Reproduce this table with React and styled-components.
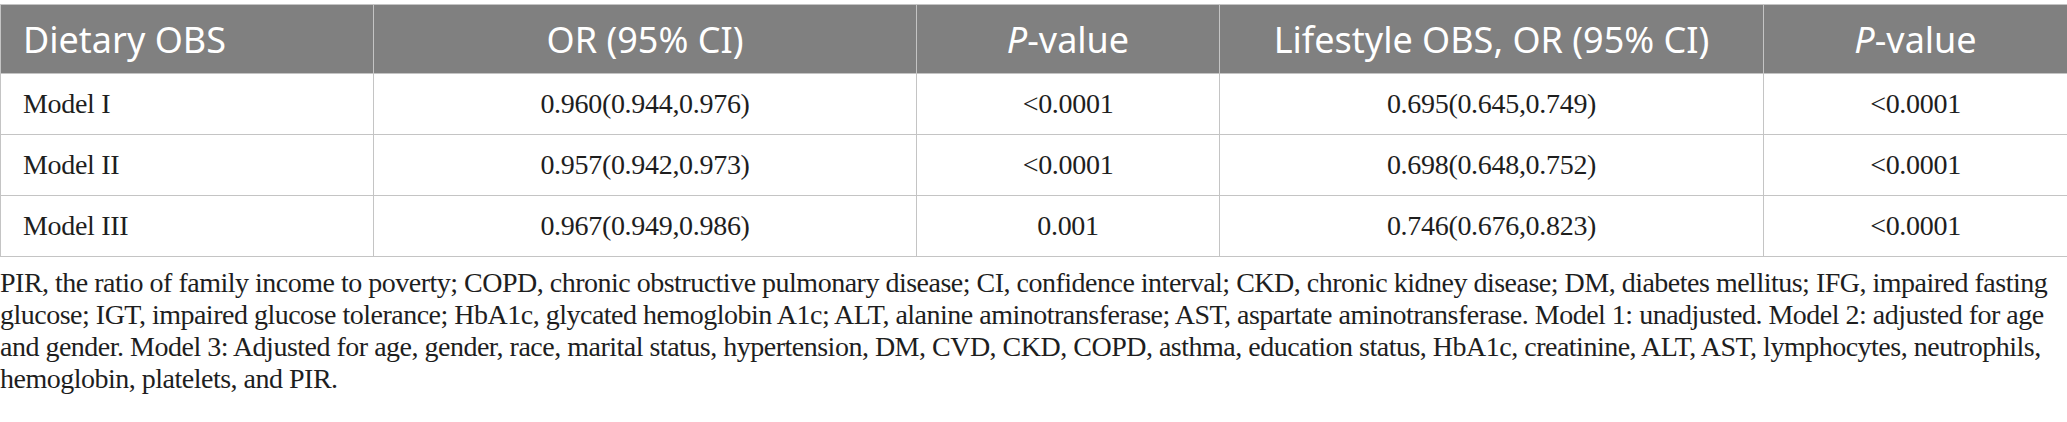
import React from 'react';
import styled, { createGlobalStyle } from 'styled-components';

const GlobalStyle = createGlobalStyle`
  html, body {
    margin: 0;
    padding: 0;
    background: #ffffff;
  }
`;

const Page = styled.div`
  width: 2067px;
  padding-top: 4px;
`;

const Table = styled.table`
  width: 100%;
  border-collapse: collapse;
  table-layout: fixed;
`;

const HeadCell = styled.th`
  height: 68px;
  padding: 0 22px;
  background: #808080;
  color: #ffffff;
  font-family: 'Noto Sans', 'Open Sans', sans-serif;
  font-size: 36px;
  font-weight: 400;
  text-align: ${({ $left }) => ($left ? 'left' : 'center')};
  border: 1px solid #c4c4c4;
  white-space: nowrap;
`;

const Cell = styled.td`
  height: 60px;
  padding: 0 22px;
  color: #1e1e1e;
  font-family: 'Liberation Serif', 'Times New Roman', serif;
  font-size: 28px;
  letter-spacing: -0.3px;
  text-align: ${({ $left }) => ($left ? 'left' : 'center')};
  border: 1px solid #c4c4c4;
  white-space: nowrap;
`;

const Footnote = styled.p`
  margin: 10px 0 0;
  color: #1e1e1e;
  font-family: 'Liberation Serif', 'Times New Roman', serif;
  font-size: 28px;
  line-height: 32px;
  letter-spacing: -0.5px;
`;

const columns = [373, 543, 303, 544, 304];

const rows = [
  ['Model I', '0.960(0.944,0.976)', '<0.0001', '0.695(0.645,0.749)', '<0.0001'],
  ['Model II', '0.957(0.942,0.973)', '<0.0001', '0.698(0.648,0.752)', '<0.0001'],
  ['Model III', '0.967(0.949,0.986)', '0.001', '0.746(0.676,0.823)', '<0.0001'],
];

const PValue = () => (
  <>
    <i>P</i>-value
  </>
);

export default function App() {
  return (
    <Page>
      <GlobalStyle />
      <Table>
        <colgroup>
          {columns.map((w, i) => (
            <col key={i} style={{ width: w }} />
          ))}
        </colgroup>
        <thead>
          <tr>
            <HeadCell $left>Dietary OBS</HeadCell>
            <HeadCell>OR (95% CI)</HeadCell>
            <HeadCell>
              <PValue />
            </HeadCell>
            <HeadCell>Lifestyle OBS, OR (95% CI)</HeadCell>
            <HeadCell>
              <PValue />
            </HeadCell>
          </tr>
        </thead>
        <tbody>
          {rows.map((row) => (
            <tr key={row[0]}>
              {row.map((value, i) => (
                <Cell key={i} $left={i === 0}>
                  {value}
                </Cell>
              ))}
            </tr>
          ))}
        </tbody>
      </Table>
      <Footnote>
        PIR, the ratio of family income to poverty; COPD, chronic obstructive pulmonary disease; CI,
        confidence interval; CKD, chronic kidney disease; DM, diabetes mellitus; IFG, impaired fasting
        glucose; IGT, impaired glucose tolerance; HbA1c, glycated hemoglobin A1c; ALT, alanine
        aminotransferase; AST, aspartate aminotransferase. Model 1: unadjusted. Model 2: adjusted for age
        and gender. Model 3: Adjusted for age, gender, race, marital status, hypertension, DM, CVD, CKD,
        COPD, asthma, education status, HbA1c, creatinine, ALT, AST, lymphocytes, neutrophils,
        hemoglobin, platelets, and PIR.
      </Footnote>
    </Page>
  );
}
